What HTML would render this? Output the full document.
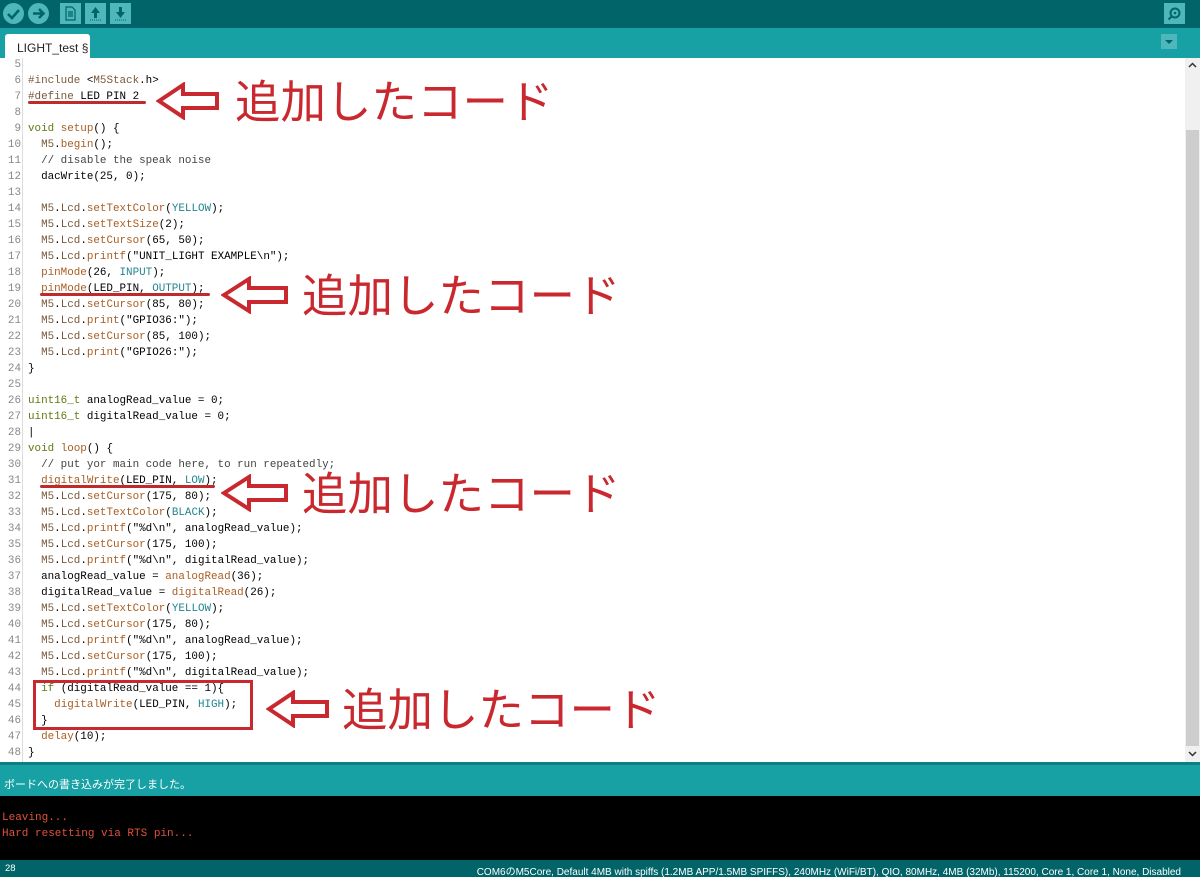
<!DOCTYPE html>
<html><head><meta charset="utf-8"><style>
*{margin:0;padding:0;box-sizing:border-box}
body{width:1200px;height:877px;overflow:hidden;background:#fff;font-family:"Liberation Sans",sans-serif;position:relative}
.tb{position:absolute;left:0;top:0;width:1200px;height:28px;background:#006468}
.tabbar{position:absolute;left:0;top:28px;width:1200px;height:30px;background:#17a1a5}
.tab{position:absolute;left:5px;top:6px;width:85px;height:24px;background:#fff;border-radius:3px 3px 0 0;font-size:12px;color:#222;padding:7px 0 0 12px}
.btn{position:absolute;top:3px;width:21px;height:21px;background:#4db7bb}
.rb{border-radius:50%}
.ed{position:absolute;left:0;top:58px;width:1185px;height:704px;background:#fff}
.gut{position:absolute;left:0;top:0;width:23px;height:704px;border-right:1px solid #ddd}
.code{position:absolute;left:0;top:-1px;font-family:"Liberation Mono",monospace;font-size:10.9px;line-height:16px;white-space:pre;color:#000}
.code .ln{display:inline-block;width:21px;text-align:right;color:#888;margin-right:7px}
.f{color:#a85d22}.c{color:#1f8590}.t{color:#5f7a10}.k{color:#5f7a10}.cm{color:#444}.m{color:#7a5a3a}
.sb{position:absolute;left:1185px;top:58px;width:15px;height:704px;background:#f0f0f0}
.th{position:absolute;left:1px;top:72px;width:13px;height:616px;background:#cdcdcd}
.msg{position:absolute;left:0;top:762px;width:1200px;height:34px;background:#17a1a5;border-top:3px solid #0d7f84;font-family:"Liberation Sans","Noto Sans CJK JP",sans-serif;font-size:11px;color:#fff;padding:11px 0 0 4px}
.con{position:absolute;left:0;top:796px;width:1200px;height:64px;background:#000;font-family:"Liberation Mono",monospace;font-size:11px;line-height:16px;color:#e0523a;padding:14px 0 0 2px;white-space:pre}
.st{position:absolute;left:0;top:860px;width:1200px;height:17px;background:#006468;color:#fff;font-size:9.5px;padding:3px 0 0 5px}
.ann{position:absolute;font-family:"Noto Sans CJK JP",sans-serif;font-size:45.5px;color:#c8282e;line-height:46px}
.ul{position:absolute;height:3px;background:#c02a2a;border-radius:2px}
svg.ar{position:absolute}
</style></head><body>
<div class="tb">
<div class="btn rb" style="left:3px;background:#4db7bb"><svg width="21" height="21"><path d="M5 11 L9 15 L16 7" stroke="#006468" stroke-width="2.5" fill="none"/></svg></div>
<div class="btn rb" style="left:28px"><svg width="21" height="21"><path d="M5 10.5 H15 M11 6 L15.5 10.5 L11 15" stroke="#006468" stroke-width="2.5" fill="none"/></svg></div>
<div class="btn" style="left:60px"><svg width="21" height="21"><path d="M6 4 H12 L15 7 V17 H6 Z M8 9 H13 M8 11 H13 M8 13 H13" stroke="#006468" stroke-width="1.2" fill="none"/></svg></div>
<div class="btn" style="left:85px"><svg width="21" height="21"><path d="M10.5 4 L15 10 H12 V15 H9 V10 H6 Z" fill="#006468"/><path d="M5 17 H16" stroke="#006468" stroke-dasharray="1 1"/></svg></div>
<div class="btn" style="left:110px"><svg width="21" height="21"><path d="M10.5 15 L15 9 H12 V4 H9 V9 H6 Z" fill="#006468"/><path d="M5 17 H16" stroke="#006468" stroke-dasharray="1 1"/></svg></div>
<div class="btn" style="left:1164px"><svg width="21" height="21"><circle cx="11" cy="10" r="4.5" stroke="#006468" stroke-width="2" fill="none"/><circle cx="11" cy="10" r="1.3" fill="#006468"/><path d="M7.5 13.5 L4.5 16.5" stroke="#006468" stroke-width="2"/></svg></div>
</div>
<div class="tabbar"><div class="tab">LIGHT_test §</div>
<div style="position:absolute;left:1161px;top:6px;width:16px;height:15px;background:#4db7bb"><svg width="16" height="15"><path d="M4 6 H12 L8 10 Z" fill="#006468"/></svg></div></div>
<div class="ed"><div class="gut"></div>
<div class="code"><span class="ln">5</span>
<span class="ln">6</span><span class="m">#include</span> &lt;<span class="m">M5Stack</span>.h&gt;
<span class="ln">7</span><span class="m">#define</span> LED PIN 2
<span class="ln">8</span>
<span class="ln">9</span><span class="t">void</span> <span class="f">setup</span>() {
<span class="ln">10</span>  <span class="m">M5</span>.<span class="f">begin</span>();
<span class="ln">11</span>  <span class="cm">// disable the speak noise</span>
<span class="ln">12</span>  dacWrite(25, 0);
<span class="ln">13</span>
<span class="ln">14</span>  <span class="m">M5</span>.<span class="m">Lcd</span>.<span class="f">setTextColor</span>(<span class="c">YELLOW</span>);
<span class="ln">15</span>  <span class="m">M5</span>.<span class="m">Lcd</span>.<span class="f">setTextSize</span>(2);
<span class="ln">16</span>  <span class="m">M5</span>.<span class="m">Lcd</span>.<span class="f">setCursor</span>(65, 50);
<span class="ln">17</span>  <span class="m">M5</span>.<span class="m">Lcd</span>.<span class="f">printf</span>("UNIT_LIGHT EXAMPLE\n");
<span class="ln">18</span>  <span class="f">pinMode</span>(26, <span class="c">INPUT</span>);
<span class="ln">19</span>  <span class="f">pinMode</span>(LED_PIN, <span class="c">OUTPUT</span>);
<span class="ln">20</span>  <span class="m">M5</span>.<span class="m">Lcd</span>.<span class="f">setCursor</span>(85, 80);
<span class="ln">21</span>  <span class="m">M5</span>.<span class="m">Lcd</span>.<span class="f">print</span>("GPIO36:");
<span class="ln">22</span>  <span class="m">M5</span>.<span class="m">Lcd</span>.<span class="f">setCursor</span>(85, 100);
<span class="ln">23</span>  <span class="m">M5</span>.<span class="m">Lcd</span>.<span class="f">print</span>("GPIO26:");
<span class="ln">24</span>}
<span class="ln">25</span>
<span class="ln">26</span><span class="t">uint16_t</span> analogRead_value = 0;
<span class="ln">27</span><span class="t">uint16_t</span> digitalRead_value = 0;
<span class="ln">28</span>|
<span class="ln">29</span><span class="t">void</span> <span class="f">loop</span>() {
<span class="ln">30</span>  <span class="cm">// put yor main code here, to run repeatedly;</span>
<span class="ln">31</span>  <span class="f">digitalWrite</span>(LED_PIN, <span class="c">LOW</span>);
<span class="ln">32</span>  <span class="m">M5</span>.<span class="m">Lcd</span>.<span class="f">setCursor</span>(175, 80);
<span class="ln">33</span>  <span class="m">M5</span>.<span class="m">Lcd</span>.<span class="f">setTextColor</span>(<span class="c">BLACK</span>);
<span class="ln">34</span>  <span class="m">M5</span>.<span class="m">Lcd</span>.<span class="f">printf</span>("%d\n", analogRead_value);
<span class="ln">35</span>  <span class="m">M5</span>.<span class="m">Lcd</span>.<span class="f">setCursor</span>(175, 100);
<span class="ln">36</span>  <span class="m">M5</span>.<span class="m">Lcd</span>.<span class="f">printf</span>("%d\n", digitalRead_value);
<span class="ln">37</span>  analogRead_value = <span class="f">analogRead</span>(36);
<span class="ln">38</span>  digitalRead_value = <span class="f">digitalRead</span>(26);
<span class="ln">39</span>  <span class="m">M5</span>.<span class="m">Lcd</span>.<span class="f">setTextColor</span>(<span class="c">YELLOW</span>);
<span class="ln">40</span>  <span class="m">M5</span>.<span class="m">Lcd</span>.<span class="f">setCursor</span>(175, 80);
<span class="ln">41</span>  <span class="m">M5</span>.<span class="m">Lcd</span>.<span class="f">printf</span>("%d\n", analogRead_value);
<span class="ln">42</span>  <span class="m">M5</span>.<span class="m">Lcd</span>.<span class="f">setCursor</span>(175, 100);
<span class="ln">43</span>  <span class="m">M5</span>.<span class="m">Lcd</span>.<span class="f">printf</span>("%d\n", digitalRead_value);
<span class="ln">44</span>  <span class="k">if</span> (digitalRead_value == 1){
<span class="ln">45</span>    <span class="f">digitalWrite</span>(LED_PIN, <span class="c">HIGH</span>);
<span class="ln">46</span>  }
<span class="ln">47</span>  <span class="f">delay</span>(10);
<span class="ln">48</span>}</div>
</div>
<div class="sb"><svg width="15" height="15"><path d="M4 9 L7.5 5.5 L11 9" stroke="#333" stroke-width="1.5" fill="none"/></svg><div class="th"></div><svg width="15" height="15" style="position:absolute;left:0;top:688px"><path d="M4 6 L7.5 9.5 L11 6" stroke="#333" stroke-width="1.5" fill="none"/></svg></div>

<div class="ul" style="left:28px;top:101px;width:118px"></div>
<div class="ul" style="left:40px;top:293px;width:170px"></div>
<div class="ul" style="left:40px;top:485px;width:175px"></div>
<div style="position:absolute;left:33px;top:680px;width:220px;height:50px;border:3px solid #c8282e"></div>

<svg class="ar" style="left:156px;top:82px" width="64" height="38"><path d="M3 19 L27 3 L27 12 L61 12 L61 26 L27 26 L27 35 Z" stroke="#c8282e" stroke-width="4" fill="none" stroke-linejoin="miter"/></svg>
<div class="ann" style="left:235px;top:76px">追加したコード</div>
<svg class="ar" style="left:221px;top:276px" width="68" height="38"><path d="M3 19 L28 3 L28 12 L65 12 L65 26 L28 26 L28 35 Z" stroke="#c8282e" stroke-width="4" fill="none"/></svg>
<div class="ann" style="left:302px;top:270px">追加したコード</div>
<svg class="ar" style="left:221px;top:474px" width="68" height="38"><path d="M3 19 L28 3 L28 12 L65 12 L65 26 L28 26 L28 35 Z" stroke="#c8282e" stroke-width="4" fill="none"/></svg>
<div class="ann" style="left:302px;top:468px">追加したコード</div>
<svg class="ar" style="left:266px;top:690px" width="64" height="38"><path d="M3 19 L27 3 L27 12 L61 12 L61 26 L27 26 L27 35 Z" stroke="#c8282e" stroke-width="4" fill="none"/></svg>
<div class="ann" style="left:342px;top:684px">追加したコード</div>

<div class="msg">ボードへの書き込みが完了しました。</div>
<div class="con">Leaving...
Hard resetting via RTS pin...</div>
<div class="st">28<span style="position:absolute;right:19px;top:3px;font-size:10px">COM6のM5Core, Default 4MB with spiffs (1.2MB APP/1.5MB SPIFFS), 240MHz (WiFi/BT), QIO, 80MHz, 4MB (32Mb), 115200, Core 1, Core 1, None, Disabled</span></div>
</body></html>
